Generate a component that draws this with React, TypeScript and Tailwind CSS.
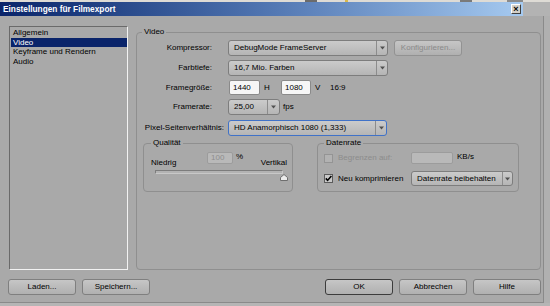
import React from "react";

const Arrow = () => (
  <svg width="5" height="4" viewBox="0 0 5 4">
    <path d="M0 0.5h5L2.5 3.5z" fill="#505050" />
  </svg>
);

const Dropdown = ({ text, w, arrowW = "w-[11px]", focus = false, h = "h-[16px]" }: { text: string; w: string; arrowW?: string; focus?: boolean; h?: string }) => (
  <div
    className={`flex ${h} ${w} items-stretch rounded-[3px] border ${
      focus ? "border-[#4072c8]" : "border-[#7d7d7d]"
    } bg-linear-to-b from-[#cbcbcb] to-[#b5b5b5]`}
  >
    <span className="flex flex-1 items-center overflow-hidden whitespace-nowrap pl-[5px]">{text}</span>
    <span className={`flex ${arrowW} items-center justify-center border-l border-[#8c8c8c]`}>
      <Arrow />
    </span>
  </div>
);

const Button = ({ label, def = false, disabled = false, w = "w-[68px]" }: { label: string; def?: boolean; disabled?: boolean; w?: string }) => (
  <button
    className={`flex h-[16px] ${w} items-center justify-center rounded-[3px] border bg-linear-to-b from-[#c6c6c6] to-[#b0b0b0] ${
      def ? "border-[#3c3c3c]" : "border-[#7f7f7f]"
    } ${disabled ? "text-[#8a8a8a] border-[#929292]" : "text-black"}`}
  >
    {label}
  </button>
);

const Field = ({ text, w, disabled = false }: { text: string; w: string; disabled?: boolean }) => (
  <div
    className={`flex h-[15px] ${w} items-center rounded-[2px] border pl-[3px] ${
      disabled ? "border-[#9c9c9c] bg-[#b9b9b9] text-[#8e8e8e]" : "border-[#8a8a8a] bg-[#f6f6f6] text-black"
    }`}
  >
    {text}
  </div>
);

const Check = ({ checked = false, disabled = false }: { checked?: boolean; disabled?: boolean }) => (
  <span
    className={`flex h-[9px] w-[9px] items-center justify-center border ${
      disabled ? "border-[#949494] bg-[#b2b2b2]" : "border-[#5c5c5c] bg-[#c9c9c9]"
    }`}
  >
    {checked && (
      <svg width="7" height="7" viewBox="0 0 7 7">
        <path d="M0.8 3.4L2.6 5.4L6.4 0.9" stroke="#000" strokeWidth="1.6" fill="none" />
      </svg>
    )}
  </span>
);

const Row = ({ label, labelW = "w-[75px]", gap = "ml-[16px]", mt, h = "h-[16px]", children }: { label: string; labelW?: string; gap?: string; mt: string; h?: string; children: React.ReactNode }) => (
  <div className={`flex ${h} ${mt} items-center`}>
    <span className={`${labelW} whitespace-nowrap text-right`}>{label}</span>
    <div className={`flex items-center ${gap}`}>{children}</div>
  </div>
);

const items = ["Allgemein", "Video", "Keyframe und Rendern", "Audio"];

export default function App() {
  return (
    <div className="flex h-[306px] w-[550px] flex-col overflow-hidden bg-[#a9a9a9] font-['Liberation_Sans',Arial,sans-serif] text-[8px] leading-[10px] text-black">
      {/* desktop strip */}
      <div className="flex h-[2px] bg-[#dedbd5]">
        <div className="ml-[305px] w-[12px] bg-[#6b6b6b]" />
        <div className="ml-[28px] w-[3px] bg-[#d9b84a]" />
        <div className="ml-[112px] w-[12px] bg-[#7a7a7a]" />
        <div className="ml-[35px] w-[16px] bg-[#8a8a8a]" />
      </div>

      {/* title bar */}
      <div className="flex h-[14px]">
        <div className="flex w-[523px] items-center justify-between bg-linear-to-r from-[#0a246a] via-[#4f74b0] to-[#a6caf0] pl-[3px] pr-[2px]">
          <span className="text-[8.3px] font-bold text-white">Einstellungen für Filmexport</span>
          <span className="flex h-[10px] w-[10px] items-center justify-center border border-t-white border-l-white border-r-[#404040] border-b-[#404040] bg-[#d4d0c8] text-[9px] leading-none font-bold">
            ×
          </span>
        </div>
        <div className="flex-1 bg-[#b3b3b3]" />
      </div>

      <div className="flex flex-1">
        <div className="flex h-[287px] w-[544px] flex-col border-r border-b border-[#8a8a8a] pt-[10px]">
          <div className="flex items-start">
            {/* list */}
            <div className="ml-[9px] h-[244px] w-[119px] border border-t-[#6a6a6a] border-l-[#6a6a6a] border-r-[#f2f2f2] border-b-[#f2f2f2] pt-[1px] pl-[1px]">
              {items.map((it) => (
                <div
                  key={it}
                  className={`h-[9.7px] pl-[2px] leading-[9.7px] ${
                    it === "Video" ? "bg-[#0a246a] text-white" : ""
                  }`}
                >
                  {it}
                </div>
              ))}
            </div>

            {/* Video group */}
            <fieldset className="mt-[1px] ml-[8px] h-[243px] w-[405px] rounded-[4px] border border-[#8f8f8f]">
              <legend className="ml-[5px] px-[2px]">Video</legend>

              <Row label="Kompressor:" mt="mt-[3px]">
                <Dropdown text="DebugMode FrameServer" w="w-[160px]" />
                <div className="ml-[6px]">
                  <Button label="Konfigurieren..." disabled w="w-[68px]" />
                </div>
              </Row>

              <Row label="Farbtiefe:" mt="mt-[4px]">
                <Dropdown text="16,7 Mio. Farben" w="w-[160px]" />
              </Row>

              <Row label="Framegröße:" mt="mt-[4px]" h="h-[15px]" gap="ml-[17px]">
                <Field text="1440" w="w-[31px]" />
                <span className="ml-[4px] w-[17px]">H</span>
                <Field text="1080" w="w-[30px]" />
                <span className="ml-[4px] w-[15px]">V</span>
                <span>16:9</span>
              </Row>

              <Row label="Framerate:" mt="mt-[4px]">
                <Dropdown text="25,00" w="w-[52px]" arrowW="w-[12px]" />
                <span className="ml-[3px]">fps</span>
              </Row>

              <Row label="Pixel-Seitenverhältnis:" labelW="w-[87px]" gap="ml-[4px]" mt="mt-[5px]">
                <Dropdown text="HD Anamorphisch 1080 (1,333)" w="w-[159px]" focus />
              </Row>

              <div className="mt-[2px] ml-[6px] flex">
                {/* Qualität */}
                <fieldset className="h-[54px] w-[150px] rounded-[4px] border border-[#8f8f8f]">
                  <legend className="ml-[7px] px-[2px]">Qualität</legend>
                  <div className="mt-[4px] flex h-[16px] pr-[5px] pl-[7px]">
                    <span className="w-[56px] self-end">Niedrig</span>
                    <div className="flex self-start">
                      <div className="flex h-[12px] w-[26px] items-center rounded-[2px] border border-[#9c9c9c] bg-[#b9b9b9] pl-[3px] text-[#8e8e8e]">
                        100
                      </div>
                      <span className="ml-[3px]">%</span>
                    </div>
                    <span className="flex-1" />
                    <span className="self-end">Vertikal</span>
                  </div>
                  <div className="relative mt-[2px] ml-[11px] h-[4px] w-[128px] rounded-[1px] border border-t-[#7c7c7c] border-l-[#7c7c7c] border-r-[#c8c8c8] border-b-[#c8c8c8] bg-[#b3b3b3]">
                    <svg className="absolute top-[3px] left-[124px]" width="8" height="7" viewBox="0 0 8 7">
                      <path d="M4 0.5L7.5 3.5V6.5H0.5V3.5Z" fill="#ececec" stroke="#6e6e6e" />
                    </svg>
                  </div>
                </fieldset>

                {/* Datenrate */}
                <fieldset className="ml-[24px] h-[54px] w-[202px] rounded-[4px] border border-[#8f8f8f]">
                  <legend className="ml-[6px] px-[2px]">Datenrate</legend>
                  <div className="mt-[4px] flex h-[12px] items-center pl-[6px]">
                    <Check disabled />
                    <span className="ml-[5px] w-[73px] text-[#8c8c8c]">Begrenzen auf:</span>
                    <div className="h-[12px] w-[42px] rounded-[2px] border border-[#9c9c9c] bg-[#b9b9b9]" />
                    <span className="ml-[4px] self-start">KB/s</span>
                  </div>
                  <div className="mt-[7px] flex h-[15px] items-center pl-[6px]">
                    <Check checked />
                    <span className="ml-[5px] w-[73px]">Neu komprimieren</span>
                    <Dropdown text="Datenrate beibehalten" w="w-[102px]" h="h-[15px]" arrowW="w-[10px]" />
                  </div>
                </fieldset>
              </div>
            </fieldset>
          </div>

          {/* bottom buttons */}
          <div className="mt-[9px] flex pr-[2px] pl-[8px]">
            <Button label="Laden..." />
            <div className="ml-[6px]">
              <Button label="Speichern..." />
            </div>
            <div className="flex-1" />
            <div className="flex gap-[6px]">
              <Button label="OK" def />
              <Button label="Abbrechen" />
              <Button label="Hilfe" />
            </div>
          </div>
        </div>
        <div className="flex-1 bg-[#b0b0b0]" />
      </div>
      <div className="h-[3px] bg-[#b5b5b5]" />
    </div>
  );
}
